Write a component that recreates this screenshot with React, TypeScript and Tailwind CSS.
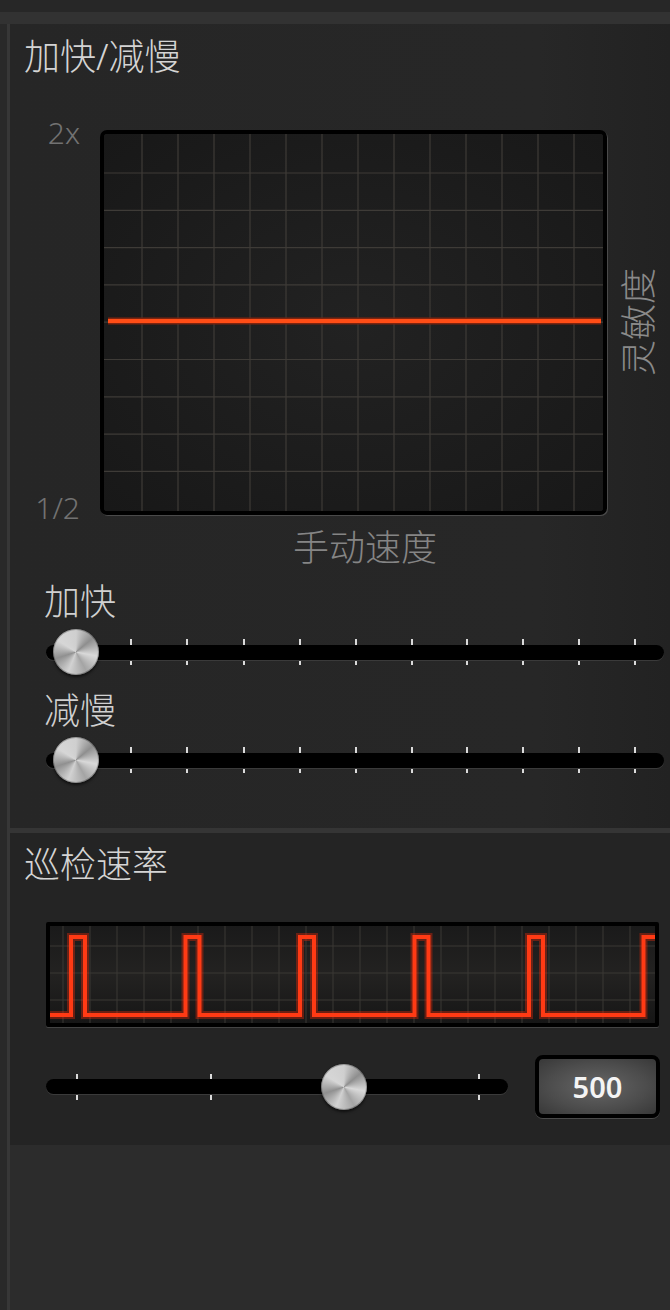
import React from "react";

const font = "font-['Noto_Sans','Noto_Sans_CJK_SC',sans-serif]";

type SliderProps = {
  width: number;
  thumb: number;
  ticks: number[];
};

function Slider({ width, thumb, ticks }: SliderProps) {
  return (
    <div className="relative flex h-[46px] shrink-0 items-center" style={{ width }}>
      {ticks.map((t) => (
        <div
          key={t}
          className="absolute top-[10px] h-[26px] w-[2px] bg-[#dadada]"
          style={{ left: t - 1 }}
        />
      ))}
      <div className="relative h-[15px] w-full rounded-full bg-black shadow-[0_1px_0_#3a3a3a]" />
      <div
        className="absolute top-0 h-[46px] w-[46px] rounded-full bg-[conic-gradient(#cfcfcf,#8e8e8e_14%,#d9d9d9_28%,#a4a4a4_42%,#d2d2d2_56%,#909090_70%,#d6d6d6_84%,#cfcfcf)] shadow-[0_2px_3px_rgba(0,0,0,0.6),inset_0_0_0_1px_rgba(0,0,0,0.25)]"
        style={{ left: thumb - 23 }}
      />
    </div>
  );
}

function SensitivityGraph() {
  const vLines = Array.from({ length: 13 }, (_, k) => 38 + k * 36);
  const hLines = Array.from({ length: 9 }, (_, k) => 39 + k * 37.3);
  return (
    <div className="h-[385px] w-[507px] shrink-0 overflow-hidden rounded-[7px] border-[4px] border-black bg-[#1d1d1d] shadow-[1px_1px_0_#4a4a4a]">
      <svg width="499" height="377" viewBox="0 0 499 377">
        <defs>
          <radialGradient id="vig" cx="50%" cy="50%" r="70%">
            <stop offset="0%" stopColor="#222" />
            <stop offset="100%" stopColor="#181818" />
          </radialGradient>
        </defs>
        <rect width="499" height="377" fill="url(#vig)" />
        {vLines.map((x) => (
          <line key={"v" + x} x1={x} y1={0} x2={x} y2={377} stroke="#3e3b37" strokeWidth="1.2" />
        ))}
        {hLines.map((y) => (
          <line key={"h" + y} x1={0} y1={y} x2={499} y2={y} stroke="#3e3b37" strokeWidth="1.2" />
        ))}
        <line x1={4} y1={187} x2={497} y2={187} stroke="#7a2410" strokeWidth="7" />
        <line x1={4} y1={187} x2={497} y2={187} stroke="#ff4d16" strokeWidth="4" />
      </svg>
    </div>
  );
}

function Waveform() {
  const vLines = Array.from({ length: 23 }, (_, k) => 13 + k * 27);
  const hLines = [20, 47, 74];
  const rises = [21, 135.5, 250, 364.5, 479];
  const pts: string[] = ["0,89"];
  rises.forEach((r) => {
    pts.push(`${r},89`, `${r},11`, `${r + 14},11`, `${r + 14},89`);
  });
  pts.push("593.5,89", "593.5,11", "605,11");
  const points = pts.join(" ");
  return (
    <div className="h-[105px] w-[613px] overflow-hidden rounded-[2px] border-[4px] border-black bg-[#1b1b1b] shadow-[0_1px_0_#444]">
      <svg width="605" height="97" viewBox="0 0 605 97">
        <defs>
          <linearGradient id="wv" x1="0" y1="0" x2="0" y2="1">
            <stop offset="0%" stopColor="#1a1a1a" />
            <stop offset="50%" stopColor="#232221" />
            <stop offset="100%" stopColor="#161616" />
          </linearGradient>
        </defs>
        <rect width="605" height="97" fill="url(#wv)" />
        {vLines.map((x) => (
          <line key={"v" + x} x1={x} y1={0} x2={x} y2={97} stroke="#3b3834" strokeWidth="1" />
        ))}
        {hLines.map((y) => (
          <line key={"h" + y} x1={0} y1={y} x2={605} y2={y} stroke="#3b3834" strokeWidth="1" />
        ))}
        <polyline points={points} fill="none" stroke="#ff2a0a" strokeOpacity="0.35" strokeWidth="8" />
        <polyline points={points} fill="none" stroke="#ff3a14" strokeWidth="4" />
      </svg>
    </div>
  );
}

export default function App() {
  const ticksA = [85, 141, 198, 254, 310, 366, 421, 477, 533, 589];
  return (
    <div className={`flex h-[1310px] w-[670px] flex-col overflow-hidden bg-[#2b2b2b] ${font}`}>
      <div className="h-[12px] bg-[#272727]" />
      <div className="h-[12px] bg-[#323232]" />
      <div className="flex flex-1">
        <div className="w-[10px] shrink-0 border-r-[3px] border-[#373737] bg-[#292929]" />
        <div className="flex min-w-0 flex-1 flex-col">
          {/* 加快/减慢 panel */}
          <div className="flex h-[804px] flex-col bg-[linear-gradient(90deg,#262626,#272727_80%,#222)]">
            <div className="pl-[14px] pt-[13px] text-[36px] font-light leading-[40px] text-[#d4d4d4]">
              加快/减慢
            </div>
            <div className="mt-[53px] flex h-[385px]">
              <div className="flex w-[90px] shrink-0 flex-col items-end justify-between pr-[20px] text-[30px] font-light leading-[30px] text-[#727272]">
                <span className="-mt-[12px]">2x</span>
                <span className="-mb-[8px]">1/2</span>
              </div>
              <SensitivityGraph />
              <div className="flex w-[63px] shrink-0 items-center justify-center">
                <span className="rotate-180 whitespace-nowrap text-[36px] font-light leading-[40px] text-[#8a8a8a] [text-orientation:sideways] [writing-mode:vertical-rl]">
                  灵敏度
                </span>
              </div>
            </div>
            <div className="ml-[90px] mt-[13px] w-[507px] pl-[23px] text-center text-[36px] font-light leading-[40px] text-[#858585]">
              手动速度
            </div>
            <div className="mt-[14px] pl-[34px] text-[36px] font-light leading-[40px] text-[#d0d0d0]">加快</div>
            <div className="ml-[36px] mt-[7px]">
              <Slider width={618} thumb={30} ticks={ticksA} />
            </div>
            <div className="mt-[16px] pl-[34px] text-[36px] font-light leading-[40px] text-[#d0d0d0]">减慢</div>
            <div className="ml-[36px] mt-[6px]">
              <Slider width={618} thumb={30} ticks={ticksA} />
            </div>
          </div>
          <div className="h-[5px] bg-[#353535]" />
          {/* 巡检速率 panel */}
          <div className="flex h-[312px] flex-col bg-[#242424]">
            <div className="pl-[14px] pt-[12px] text-[36px] font-light leading-[40px] text-[#d4d4d4]">
              巡检速率
            </div>
            <div className="ml-[36px] mt-[37px]">
              <Waveform />
            </div>
            <div className="ml-[36px] mt-[28px] flex h-[63px] items-center">
              <Slider width={462} thumb={298} ticks={[31, 165, 298, 433]} />
              <div className="ml-[27px] flex h-[63px] w-[125px] shrink-0 items-center justify-center rounded-[8px] border-[4px] border-black bg-[radial-gradient(ellipse_at_center,#666_0%,#4c4c4c_60%,#383838_100%)] text-[29px] font-semibold text-[#f4f4f4] shadow-[0_1px_0_#4a4a4a]">
                500
              </div>
            </div>
          </div>
          <div className="flex-1 bg-[#2c2c2c]" />
        </div>
      </div>
    </div>
  );
}
